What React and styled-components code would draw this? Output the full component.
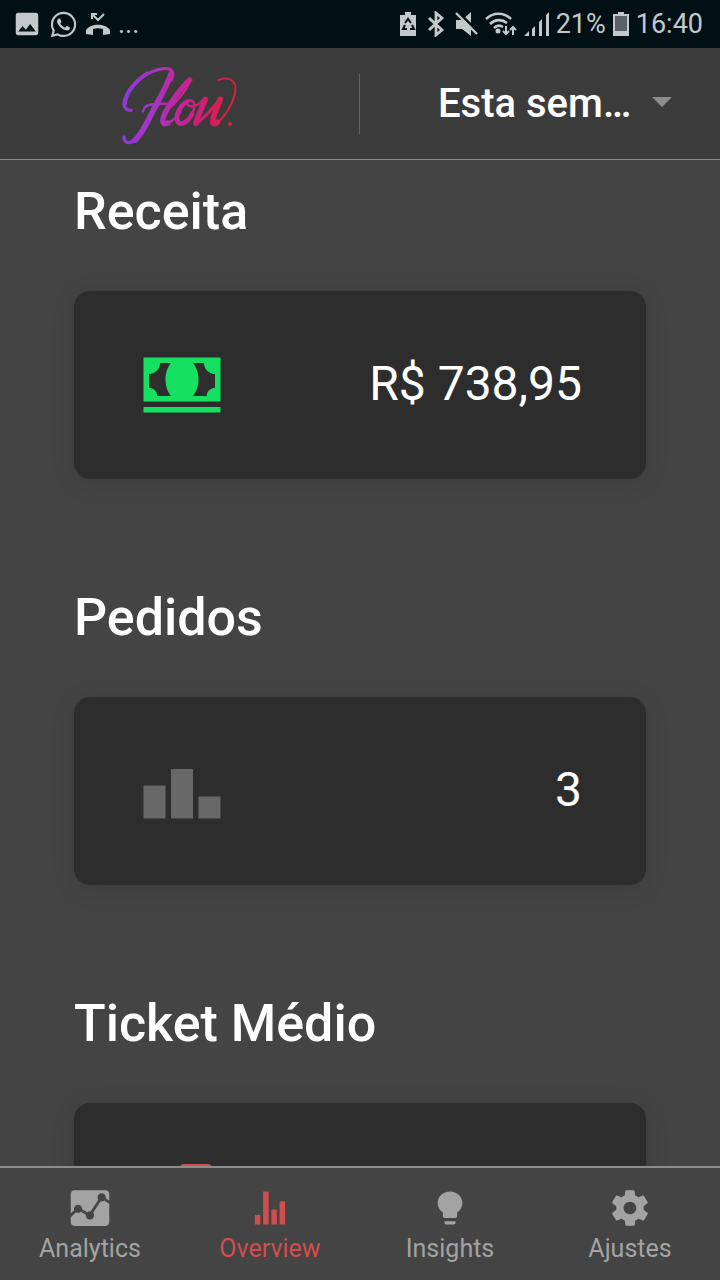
import React from 'react';
import styled, { createGlobalStyle } from 'styled-components';
import { IoMdCash, IoMdPodium, IoMdAnalytics, IoMdStats, IoMdBulb, IoMdSettings, IoMdPricetag } from 'react-icons/io';
import { MdImage } from 'react-icons/md';
import { FaWhatsapp } from 'react-icons/fa';

const GlobalStyle = createGlobalStyle`
    * {
        box-sizing: border-box;
    }

    body {
        margin: 0;
        background: #444444;
        font-family: Roboto, "Liberation Sans", sans-serif;
    }
`

const Screen = styled.div`
    display: flex;
    flex-direction: column;
    height: 100vh;
    color: #ffffff;
`

const StatusBar = styled.div`
    display: flex;
    flex: none;
    align-items: center;
    justify-content: space-between;
    height: 48px;
    padding: 0 17px 0 12px;
    background: #001014;
    color: #c3c9cb;
    font-size: 27px;
`

const StatusGroup = styled.div`
    display: flex;
    align-items: center;
    gap: 7px;

    & svg {
        display: block;
        flex: none;
    }
`

const StatusText = styled.span`
    line-height: 32px;
`

const Header = styled.header`
    display: grid;
    flex: none;
    grid-template-columns: 1fr 1fr;
    align-items: center;
    height: 112px;
    background: #3b3b3b;
    border-bottom: 1px solid #8c8c8c;
`

const LogoArea = styled.div`
    display: flex;
    align-items: center;
    justify-content: center;
    height: 60px;
    border-right: 1px solid #626262;

    & svg {
        flex: none;
    }
`

const PeriodArea = styled.label`
    display: flex;
    align-items: center;
    justify-content: flex-end;
    gap: 16px;
    padding-right: 48px;
`

const PeriodSelect = styled.select`
    width: 198px;
    padding: 0;
    border: 0;
    appearance: none;
    background: transparent;
    color: #ffffff;
    font-family: inherit;
    font-size: 40px;
    font-weight: 500;
    line-height: 48px;
    overflow: hidden;
    text-overflow: ellipsis;
    white-space: nowrap;
`

const Caret = styled.span`
    border: 10px solid transparent;
    border-top-color: #8c8c8c;
    border-bottom: 0;
    margin-bottom: 4px;
`

const Content = styled.main`
    flex: 1;
    min-height: 0;
    overflow: hidden;
    padding: 21px 74px 0;
`

const Section = styled.section`
    margin-bottom: 108px;
`

const Title = styled.h2`
    margin: 0 0 48px;
    font-size: 52px;
    font-weight: 500;
    line-height: 62px;
`

const Card = styled.div`
    display: flex;
    align-items: center;
    justify-content: space-between;
    height: 188px;
    padding: 0 64px;
    border-radius: 16px;
    background: #2d2d2d;
    box-shadow: 0 4px 24px rgba(0, 0, 0, 0.12);

    & svg {
        color: ${({ $color }) => $color};
        width: 88px;
        height: 88px;
    }
`

const Value = styled.span`
    padding-bottom: 2px;
    font-size: 48px;
    line-height: 56px;
`

const TabBar = styled.nav`
    display: flex;
    flex: none;
    height: 114px;
    border-top: 2px solid #8c8c8c;
    background: #444444;
`

const Tab = styled.a`
    display: flex;
    flex: 1 1 0;
    flex-direction: column;
    align-items: center;
    gap: 4px;
    padding-top: 18px;
    color: ${({ $active }) => ($active ? '#d04e4e' : '#a3a3a3')};
    font-size: 25px;
    line-height: 30px;
    text-decoration: none;

    & svg {
        width: 44px;
        height: 44px;
    }
`

const FlowLogo = () => (
    <svg width="140" height="95" viewBox="0 0 420 285" fill="none" stroke="url(#flow)" strokeLinecap="round" strokeLinejoin="round" role="img" aria-label="Flow">
        <defs>
            <linearGradient id="flow" gradientUnits="userSpaceOnUse" x1="40" y1="0" x2="380" y2="0">
                <stop offset="0" stopColor="#9038d8" />
                <stop offset="0.28" stopColor="#a535c0" />
                <stop offset="0.5" stopColor="#c3259a" />
                <stop offset="0.8" stopColor="#d81c5c" />
                <stop offset="1" stopColor="#cf2440" />
            </linearGradient>
        </defs>
        <path d="M64 163C44 164 38 148 45 128C59 88 107 45 158 38C187 34 195 48 184 72" strokeWidth="9" />
        <path d="M45 142C46 112 75 75 112 52" strokeWidth="12" />
        <path d="M183 54C171 91 143 137 122 178C106 211 91 239 75 252" strokeWidth="17" />
        <path d="M82 244C67 263 42 267 42 243" strokeWidth="10" />
        <path d="M99 166C102 148 119 144 137 144L170 143" strokeWidth="7" />
        <path d="M239 72C216 91 179 143 164 174C152 200 160 207 174 201" strokeWidth="16" />
        <path d="M160 174C195 143 224 112 240 77M174 201C189 195 202 181 211 168" strokeWidth="7" />
        <path d="M232 137C213 145 197 174 202 193C208 215 235 197 246 174" strokeWidth="14" />
        <path d="M246 174C259 148 253 130 235 133C224 146 238 158 264 145C270 142 274 136 279 132" strokeWidth="7" />
        <path d="M286 130C278 153 263 179 258 202" strokeWidth="16" />
        <path d="M258 204C281 186 306 161 329 130" strokeWidth="9" />
        <path d="M331 130C322 154 310 177 308 193C307 205 315 205 322 199" strokeWidth="17" />
        <path d="M318 203C346 184 371 138 376 105C380 73 356 60 326 72" strokeWidth="6" />
        <circle cx="360" cy="204" r="3" strokeWidth="6" />
    </svg>
)

const MissedCall = () => (
    <svg width="26" height="24" viewBox="0 0 26 24" fill="currentColor">
        <path d="M1 22v-4c5-7 19-7 24 0v4l-7 1v-6c-3-1-7-1-10 0v6z" />
        <path d="M7 7V2h5M7 2l6 6 6-6" fill="none" stroke="currentColor" strokeWidth="2" />
    </svg>
)

const BatterySaver = () => (
    <svg width="18" height="26" viewBox="0 0 18 26" fill="currentColor">
        <path d="M6 1h6v3h5v21H1V4h5z" />
        <path d="M6 12l3-4 3 4M13 14l2 4h-4M8 18H4l2-4" fill="none" stroke="#001014" strokeWidth="2" />
    </svg>
)

const Bluetooth = () => (
    <svg width="24" height="26" viewBox="-3 0 24 26" fill="none" stroke="currentColor" strokeWidth="2.8">
        <path d="M2 7l13 12-6 5V2l6 5L2 19" />
    </svg>
)

const Mute = () => (
    <svg width="23" height="24" viewBox="0 0 23 24" fill="currentColor">
        <path d="M1 8h6l9-8v24l-9-7H1z" />
        <path d="M3 0l20 20" stroke="#001014" strokeWidth="3" />
        <path d="M1 1l21 21" stroke="currentColor" strokeWidth="2.4" />
    </svg>
)

const Wifi = () => (
    <svg width="32" height="26" viewBox="0 0 32 26" fill="none" stroke="currentColor" strokeWidth="2.6">
        <path d="M1 8C8 1 19 1 26 8M5 13C10 8 17 8 22 12M9 17C12 14 15 14 18 16" />
        <circle cx="13" cy="20" r="1.2" />
        <path d="M21 15v8M18 20l3 3 3-3M28 24v-8M25 19l3-3 3 3" strokeWidth="2" />
    </svg>
)

const Signal = () => (
    <svg width="25" height="24" viewBox="0 0 25 24" fill="currentColor">
        <path d="M0 24l5-5v5zM8 17l3-3v10H8zM15 10l3-3v17h-3zM22 3l3-3v24h-3z" />
    </svg>
)

const Battery = () => (
    <svg width="16" height="24" viewBox="0 0 16 24" fill="currentColor">
        <path d="M5 0h6v2h5v22H0V2h5z" />
        <path d="M2 4h12v15H2z" fill="#566268" />
    </svg>
)

const metrics = [
    { title: 'Receita', value: 'R$ 738,95', color: '#16e062', Icon: IoMdCash },
    { title: 'Pedidos', value: '3', color: '#686868', Icon: IoMdPodium },
    { title: 'Ticket Médio', value: '', color: '#d04e4e', Icon: IoMdPricetag },
]

const tabs = [
    { label: 'Analytics', Icon: IoMdAnalytics },
    { label: 'Overview', Icon: IoMdStats, active: true },
    { label: 'Insights', Icon: IoMdBulb },
    { label: 'Ajustes', Icon: IoMdSettings },
]

export default function App() {
    return (
        <>
            <GlobalStyle />
            <Screen>
                <StatusBar>
                    <StatusGroup>
                        <MdImage size={30} />
                        <FaWhatsapp size={29} />
                        <MissedCall />
                        <StatusText>...</StatusText>
                    </StatusGroup>
                    <StatusGroup>
                        <BatterySaver />
                        <Bluetooth />
                        <Mute />
                        <Wifi />
                        <Signal />
                        <StatusText>21%</StatusText>
                        <Battery />
                        <StatusText>16:40</StatusText>
                    </StatusGroup>
                </StatusBar>
                <Header>
                    <LogoArea>
                        <FlowLogo />
                    </LogoArea>
                    <PeriodArea>
                        <PeriodSelect aria-label="Período" defaultValue="week">
                            <option value="week">Esta semana</option>
                        </PeriodSelect>
                        <Caret />
                    </PeriodArea>
                </Header>
                <Content>
                    {metrics.map(({ title, value, color, Icon }) => (
                        <Section key={title}>
                            <Title>{title}</Title>
                            <Card $color={color}>
                                <Icon />
                                <Value>{value}</Value>
                            </Card>
                        </Section>
                    ))}
                </Content>
                <TabBar>
                    {tabs.map(({ label, Icon, active }) => (
                        <Tab key={label} href={'#' + label.toLowerCase()} $active={active}>
                            <Icon />
                            {label}
                        </Tab>
                    ))}
                </TabBar>
            </Screen>
        </>
    );
}
